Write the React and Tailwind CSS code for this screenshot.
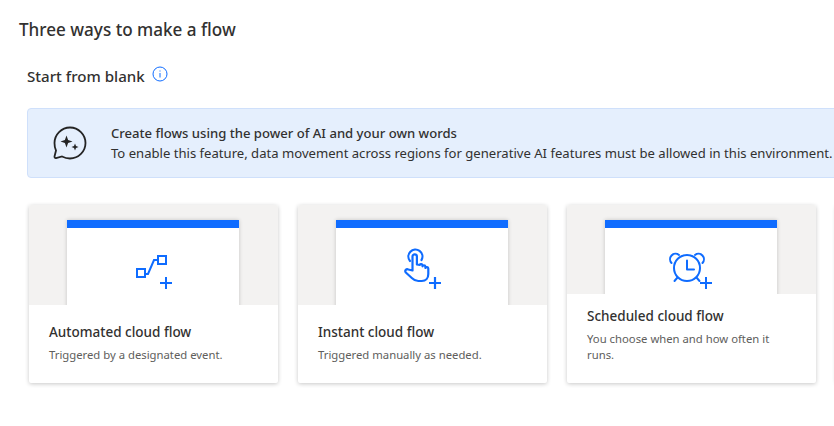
function Plus({ x, y }) {
  return <path d={`M${x - 6} ${y}H${x + 6}M${x} ${y - 6}V${y + 6}`} strokeLinecap="butt" />;
}

function AutomatedIcon() {
  return (
    <svg width="60" height="50" viewBox="0 0 60 50" fill="none" stroke="#0f6cff" strokeWidth="2" className="mt-[17px] shrink-0">
      <rect x="14" y="24" width="8" height="8" />
      <rect x="35" y="11" width="8" height="8" />
      <path d="M22 29h3l6 -14h4" />
      <Plus x={43} y={38} />
    </svg>
  );
}

function InstantIcon() {
  return (
    <svg width="60" height="50" viewBox="0 0 60 50" fill="none" stroke="#0f6cff" strokeWidth="2.200" strokeLinecap="round" strokeLinejoin="round" className="mt-[17px] shrink-0">
      <path d="M18 16a7 7 0 1 1 11.500 -1" />
      <path d="M20.500 25.500V11.500a2.200 2.200 0 0 1 4.400 0V19.500l2.800 0.500a1.500 1.500 0 0 1 2.800 0.300l0 1a1.500 1.500 0 0 1 2.900 0.200l0 1.500a1.500 1.500 0 0 1 2.900 0.500V29c0 4 -2.500 7 -6.500 7h-3.500c-3 0 -4.500 -1 -6.500 -3l-6 -5.500c-1.500 -2 0.700 -4 2.500 -3z" />
      <Plus x={43} y={38} />
    </svg>
  );
}

function ScheduledIcon() {
  return (
    <svg width="60" height="50" viewBox="0 0 60 50" fill="none" stroke="#0f6cff" strokeWidth="2" strokeLinecap="round" strokeLinejoin="round" className="mt-[17px] shrink-0">
      <circle cx="26" cy="23" r="13" />
      <path d="M26 15.500V24.500H33" />
      <path d="M10.500 18a5.500 5.500 0 0 1 7.500 -8M41.500 18a5.500 5.500 0 0 0 -7.500 -8" />
      <path d="M16.500 32.500l-3 3.500M35.500 32.500l3 3.500" />
      <Plus x={45} y={38} />
    </svg>
  );
}

function Card({ title, desc, Icon }) {
  return (
    <div className="flex w-[249.500px] h-[178px] shrink-0 flex-col rounded-[2px] bg-white shadow-[0_1px_4px_rgba(0,0,0,0.22)]">
      <div className="flex min-h-0 flex-1 overflow-hidden rounded-t-[2px] bg-[#f3f2f1] px-[38.500px] pt-[15px]">
        <div className="flex h-[120px] w-[172px] flex-col items-center border-t-[8px] border-[#0f6cff] bg-white shadow-[0_0_4px_rgba(0,0,0,0.2)]">
          {Icon ? <Icon /> : null}
        </div>
      </div>
      <div className="flex min-h-[78px] flex-col justify-end px-[20.500px] pt-3 pb-5">
        <div className="text-[13.500px] leading-5 font-medium text-[#323130]">{title}</div>
        <div className="mt-[5px] text-[11.300px] leading-4 text-[#605e5c]">{desc}</div>
      </div>
    </div>
  );
}

export default function App() {
  return (
    <div className="h-[426px] w-[834px] overflow-hidden bg-white pt-[18px] font-['Noto_Sans',sans-serif] text-[#323130]">
      <h1 className="pl-[19px] text-[17.100px] leading-6 font-medium">Three ways to make a flow</h1>
      <div className="mt-[23px] flex items-start pl-[27px]">
        <h2 className="text-[15.100px] leading-[22px] font-medium">Start from blank</h2>
        <svg width="16" height="16" viewBox="0 0 16 16" fill="none" stroke="#0f6cff" className="mt-[1px] ml-[7px]">
          <circle cx="8" cy="8" r="7" />
          <path d="M8 7v4.500M8 4.500v1" />
        </svg>
      </div>
      <div className="mt-[21px] ml-[27px] flex h-[70px] w-[860px] items-center rounded-[4px] border border-[#cfe0fb] bg-[#e5effd] pl-[24px]">
        <svg width="36" height="36" viewBox="0 0 36 36" fill="none" className="shrink-0">
          <path d="M18 2.500c8.500 0 15.500 7 15.500 15.500S26.500 33.500 18 33.500c-3 0 -5.500 -0.700 -8 -2l-6 1.500c-1 0.200 -1.700 -0.500 -1.500 -1.500l1.500 -6C2.900 23.500 2.500 21 2.500 18 2.500 9.500 9.500 2.500 18 2.500z" stroke="#242424" strokeWidth="1.800" />
          <path d="M14.500 10.500l1.600 4.400 4.400 1.600 -4.400 1.600 -1.600 4.400 -1.600 -4.400 -4.400 -1.600 4.400 -1.600z" fill="#242424" />
          <path d="M23 18.500l1 2.500 2.500 1 -2.500 1 -1 2.500 -1 -2.500 -2.500 -1 2.500 -1z" fill="#242424" />
        </svg>
        <div className="ml-[23px] whitespace-nowrap text-[13.100px] leading-[20px]">
          <div className="font-medium">Create flows using the power of AI and your own words</div>
          <div>To enable this feature, data movement across regions for generative AI features must be allowed in this environment.</div>
        </div>
      </div>
      <div className="mt-[27px] flex gap-[19.500px] pl-[28.500px]">
        <Card title="Automated cloud flow" desc="Triggered by a designated event." Icon={AutomatedIcon} />
        <Card title="Instant cloud flow" desc="Triggered manually as needed." Icon={InstantIcon} />
        <Card title="Scheduled cloud flow" desc="You choose when and how often it runs." Icon={ScheduledIcon} />
        <Card title="" desc="" />
      </div>
    </div>
  );
}
